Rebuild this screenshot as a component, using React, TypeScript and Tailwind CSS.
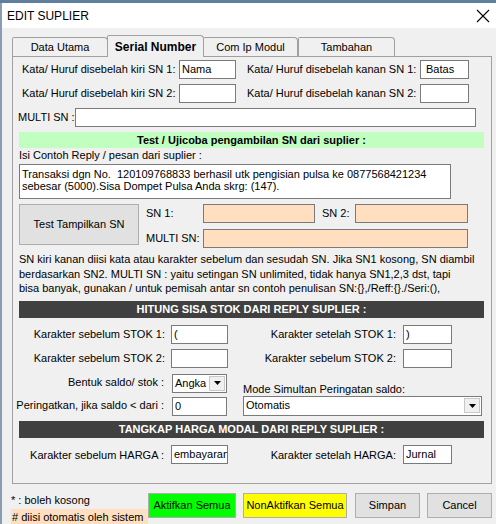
import React from "react"

const box = "h-[19px] border border-[#7a7a7a] bg-white px-[2px] flex items-center leading-none overflow-hidden whitespace-nowrap"
const peach = "h-[19px] border border-[#7a7a7a] bg-[#ffdfbf]"
const darkBar = "ml-[6px] w-[465px] h-[17px] bg-[#404040] text-white font-bold flex items-center justify-center"
const winBtn = "h-[25px] border border-[#adadad] flex items-center justify-center whitespace-nowrap"

function TextBox({ w, value, className = "" }: { w: string; value?: string; className?: string }) {
  return <div className={`${box} ${w} ${className}`}>{value}</div>
}

function Combo({ w, value }: { w: string; value: string }) {
  return (
    <div className={`h-[19px] border border-[#7a7a7a] bg-white flex items-center ${w}`}>
      <span className="flex-1 px-[2px] overflow-hidden whitespace-nowrap">{value}</span>
      <div className="w-[16px] h-[15px] mr-[1px] bg-[#f0f0f0] border border-[#c8c8c8] flex items-center justify-center">
        <svg width="7" height="4" viewBox="0 0 7 4">
          <path d="M0 0h7L3.5 4z" fill="#000" />
        </svg>
      </div>
    </div>
  )
}

function Tab({ label, active = false, w }: { label: string; active?: boolean; w: string }) {
  if (active) {
    return (
      <div
        className={`${w} h-[22px] -mx-[1px] -mb-[1px] relative z-10 bg-[#f0f0f0] border border-b-0 border-[#a0a0a0] rounded-tr-[4px] rounded-tl-[2px] flex items-center justify-center font-bold text-[12px]`}
      >
        {label}
      </div>
    )
  }
  return (
    <div
      className={`${w} h-[19px] bg-[#f0f0f0] border border-b-0 border-[#a0a0a0] rounded-tr-[4px] rounded-tl-[2px] flex items-center justify-center`}
    >
      {label}
    </div>
  )
}

export default function App() {
  return (
    <div className="w-[496px] h-[524px] overflow-hidden bg-[#f0f0f0] text-[11px] text-black font-['Liberation_Sans',Arial,sans-serif] flex flex-col">
      <div className="h-[3px] bg-[#5f7f9f] shrink-0" />
      <div className="flex flex-1">
        <div className="w-[2px] bg-[#8c9cb0] shrink-0" />
        <div className="flex-1 flex flex-col">
          {/* title bar */}
          <div className="h-[25px] bg-white flex items-center justify-between pl-[5px] pr-[6px] shrink-0">
            <span className="text-[12px]">EDIT SUPLIER</span>
            <svg width="14" height="14" viewBox="0 0 14 14">
              <path d="M1 1L13 13M13 1L1 13" stroke="#000" strokeWidth="1.1" />
            </svg>
          </div>

          {/* tabs */}
          <div className="pl-[10px] pt-[8px]">
            <div className="flex items-end h-[20px] pl-0">
              <Tab label="Data Utama" w="w-[96px]" />
              <Tab label="Serial Number" active w="w-[97px]" />
              <Tab label="Com Ip Modul" w="w-[95px]" />
              <Tab label="Tambahan" w="w-[97px]" />
            </div>

            <div className="w-[480px] h-[428px] border border-[#a0a0a0] bg-[#f0f0f0]">
              {/* SN words */}
              <div className="flex items-center mt-[3px] pl-[9px]">
                <span className="w-[157px]">Kata/ Huruf disebelah kiri SN 1:</span>
                <TextBox w="w-[57px]" value="Nama" />
                <span className="w-[173px] ml-[11px]">Kata/ Huruf disebelah kanan SN 1:</span>
                <TextBox w="w-[49px]" value="Batas" className="pl-[5px]" />
              </div>
              <div className="flex items-center mt-[5px] pl-[9px]">
                <span className="w-[157px]">Kata/ Huruf disebelah kiri SN 2:</span>
                <TextBox w="w-[57px]" />
                <span className="w-[173px] ml-[11px]">Kata/ Huruf disebelah kanan SN 2:</span>
                <TextBox w="w-[49px]" />
              </div>
              <div className="flex items-center mt-[5px] pl-[5px]">
                <span className="w-[57px]">MULTI SN :</span>
                <TextBox w="w-[401px]" />
              </div>

              <div className="ml-[6px] mt-[5px] w-[465px] h-[16px] bg-[#c0ffc0] font-bold flex items-center justify-center">
                Test / Ujicoba pengambilan SN dari suplier :
              </div>
              <div className="ml-[6px] mt-[1px] h-[13px] leading-[13px]">Isi Contoh Reply / pesan dari suplier :</div>
              <div className="ml-[6px] mt-[2px] w-[432px] h-[35px] border border-[#7a7a7a] bg-white px-[2px] pt-[3px] leading-[12px] whitespace-pre">
                {"Transaksi dgn No.  120109768833 berhasil utk pengisian pulsa ke 0877568421234\nsebesar (5000).Sisa Dompet Pulsa Anda skrg: (147)."}
              </div>

              {/* test section */}
              <div className="flex ml-[6px] mt-[5px]">
                <div className={`${winBtn} w-[120px] h-[41px] bg-[#e1e1e1]`}>Test Tampilkan SN</div>
                <div className="ml-[7px] flex flex-col gap-[6px]">
                  <div className="flex items-center">
                    <span className="w-[57px] self-start pt-[1px]">SN 1:</span>
                    <div className={`${peach} w-[112px] h-[18px]`} />
                    <span className="w-[33px] ml-[7px] self-start pt-[1px]">SN 2:</span>
                    <div className={`${peach} w-[113px] h-[18px]`} />
                  </div>
                  <div className="flex items-center">
                    <span className="w-[57px]">MULTI SN:</span>
                    <div className={`${peach} w-[265px]`} />
                  </div>
                </div>
              </div>

              <p className="ml-[6px] mt-[4px] leading-[14.5px]">
                SN kiri kanan diisi kata atau karakter sebelum dan sesudah SN. Jika SN1 kosong, SN diambil
                <br />
                berdasarkan SN2. MULTI SN : yaitu setingan SN unlimited, tidak hanya SN1,2,3 dst, tapi
                <br />
                bisa banyak, gunakan / untuk pemisah antar sn contoh penulisan SN:{"{}"},/Reff:{"{}"}./Seri:(),
              </p>

              <div className={`${darkBar} mt-[5px]`}>HITUNG SISA STOK DARI REPLY SUPLIER :</div>

              <div className="flex items-center mt-[7px]">
                <span className="w-[152px] text-right">Karakter sebelum STOK 1:</span>
                <TextBox w="w-[57px] ml-[6px]" value="(" />
                <span className="w-[168px] text-right">Karakter setelah STOK 1:</span>
                <TextBox w="w-[49px] ml-[7px]" value=")" />
              </div>
              <div className="flex items-center mt-[5px]">
                <span className="w-[152px] text-right">Karakter sebelum STOK 2:</span>
                <TextBox w="w-[57px] ml-[6px]" />
                <span className="w-[168px] text-right">Karakter sebelum STOK 2:</span>
                <TextBox w="w-[49px] ml-[7px]" />
              </div>

              <div className="flex mt-[6px]">
                <div className="flex flex-col gap-[4px]">
                  <div className="flex items-center">
                    <span className="w-[151px] text-right self-start">Bentuk saldo/ stok :</span>
                    <div className="ml-[8px]">
                      <Combo w="w-[55px]" value="Angka" />
                    </div>
                  </div>
                  <div className="flex items-center">
                    <span className="w-[151px] text-right self-start">Peringatkan, jika saldo &lt; dari :</span>
                    <TextBox w="w-[55px] ml-[8px] h-[18px]" value="0" />
                  </div>
                </div>
                <div className="ml-[16px] flex flex-col">
                  <span className="h-[14px] mt-[8px] leading-[14px]">Mode Simultan Peringatan saldo:</span>
                  <div className="mt-[0px]">
                    <Combo w="w-[239px] h-[20px]" value="Otomatis" />
                  </div>
                </div>
              </div>

              <div className={`${darkBar} mt-[5px]`}>TANGKAP HARGA MODAL DARI REPLY SUPLIER :</div>

              <div className="flex items-center mt-[7px]">
                <span className="w-[151px] text-right self-start pt-[2px]">Karakter sebelum HARGA :</span>
                <div className={`${box} w-[57px] ml-[7px] px-0`}>embayaran</div>
                <span className="w-[168px] text-right self-start pt-[2px]">Karakter setelah HARGA:</span>
                <TextBox w="w-[49px] ml-[7px]" value="Jurnal" />
              </div>
            </div>
          </div>

          {/* footer */}
          <div className="flex pl-[9px] mt-[1px]">
            <div className="w-[137px] flex flex-col whitespace-nowrap text-[11px]">
              <span className="h-[16px] leading-[16px] mt-[7px]">* : boleh kosong</span>
              <span className="h-[16px] leading-[16px] mt-[1px] bg-[#ffdfbf] pl-[1px]">
                # diisi otomatis oleh sistem
              </span>
            </div>
            <div className="flex gap-[7px] mt-[8px] h-[25px] text-[11px]">
              <div className={`${winBtn} w-[88px] bg-[#00ff00]`}>Aktifkan Semua</div>
              <div className={`${winBtn} w-[104px] bg-[#ffff00]`}>NonAktifkan Semua</div>
              <div className={`${winBtn} w-[65px] bg-[#e1e1e1] ml-[1px]`}>Simpan</div>
              <div className={`${winBtn} w-[65px] bg-[#e1e1e1]`}>Cancel</div>
            </div>
          </div>
        </div>
      </div>
    </div>
  )
}
